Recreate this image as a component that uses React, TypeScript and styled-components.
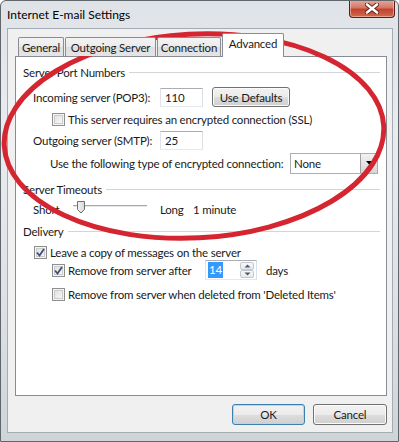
import React from 'react';
import styled, { createGlobalStyle } from 'styled-components';

const GlobalStyle = createGlobalStyle`
  html, body {
    margin: 0;
    padding: 0;
    background: #ffffff;
  }
  body {
    font-family: Lato, "Open Sans", "Liberation Sans", sans-serif;
    font-size: 11.5px;
    letter-spacing: -0.2px;
    color: #1a1a1a;
  }
  * {
    box-sizing: border-box;
  }
`;

const Window = styled.div`
  position: relative;
  width: 399px;
  height: 442px;
  display: flex;
  flex-direction: column;
  border: 1px solid #5f666c;
  border-radius: 6px 6px 0 0;
  background: linear-gradient(180deg, #dfe3e8 0%, #e9ecef 30%, #dde1e6 70%, #cfd4d9 100%);
  overflow: hidden;
`;

const TitleBar = styled.div`
  height: 27px;
  display: flex;
  align-items: flex-start;
  padding-left: 6px;
  flex-shrink: 0;
`;

const Title = styled.span`
  margin-top: 6px;
  font-size: 12px;
  letter-spacing: 0;
  color: #000;
  flex: 1;
`;

const CloseButton = styled.div`
  width: 46px;
  height: 18px;
  margin-top: -1px;
  margin-right: 3px;
  border: 1px solid #5a1e16;
  border-top: none;
  border-radius: 0 0 4px 4px;
  background: linear-gradient(180deg, #e9a99b 0%, #d47866 45%, #c2432f 55%, #cf6a4f 100%);
  box-shadow: inset 0 0 0 1px rgba(255, 220, 210, 0.5);
  display: flex;
  align-items: center;
  justify-content: center;
`;

const Client = styled.div`
  flex: 1;
  margin: 0 5px 8px 6px;
  border: 1px solid #a3abb4;
  background: #f0f0f0;
  padding: 4px 5px 0 7px;
  display: flex;
  flex-direction: column;
`;

const TabStrip = styled.div`
  height: 23px;
  display: flex;
  align-items: flex-end;
  gap: 1px;
  padding-left: 3px;
  position: relative;
  z-index: 1;
`;

const Tab = styled.div<{ $w: number; $active?: boolean }>`
  width: ${(p) => p.$w}px;
  height: ${(p) => (p.$active ? 24 : 19)}px;
  margin-bottom: ${(p) => (p.$active ? -1 : 0)}px;
  border: 1px solid #898c95;
  border-bottom: none;
  border-radius: 2px 2px 0 0;
  background: ${(p) =>
    p.$active ? '#ffffff' : 'linear-gradient(180deg, #f3f3f3 0%, #ebebeb 50%, #dedede 51%, #e5e5e5 100%)'};
  display: flex;
  align-items: center;
  justify-content: center;
  padding-bottom: ${(p) => (p.$active ? 4 : 0)}px;
  white-space: nowrap;
`;

const Panel = styled.div`
  height: 340px;
  border: 1px solid #898c95;
  background: #ffffff;
  padding: 6px 6px 0 7px;
  display: flex;
  flex-direction: column;
`;

const Row = styled.div<{ $mt?: number; $indent?: number }>`
  height: 18px;
  display: flex;
  align-items: center;
  margin-top: ${(p) => p.$mt ?? 0}px;
  padding-left: ${(p) => p.$indent ?? 0}px;
  white-space: nowrap;
`;

const GroupLine = styled.div`
  flex: 1;
  height: 1px;
  margin-left: 4px;
  background: #d0d5d9;
`;

const Label = styled.span<{ $w?: number; $ml?: number }>`
  display: inline-block;
  flex-shrink: 0;
  width: ${(p) => (p.$w ? `${p.$w}px` : 'auto')};
  margin-left: ${(p) => p.$ml ?? 0}px;
`;

const TextBox = styled.div`
  width: 43px;
  height: 19px;
  border: 1px solid;
  border-color: #abadb3 #dbdfe6 #e3e9ef #e2e3ea;
  background: #ffffff;
  padding-left: 4px;
  display: flex;
  align-items: center;
  flex-shrink: 0;
`;

const PushButton = styled.div<{ $w: number; $default?: boolean }>`
  width: ${(p) => p.$w}px;
  height: 21px;
  border: 1px solid ${(p) => (p.$default ? '#3c7fb1' : '#707070')};
  border-radius: 3px;
  background: linear-gradient(180deg, #f2f2f2 0%, #ebebeb 50%, #dddddd 51%, #cfcfcf 100%);
  box-shadow: inset 0 0 0 1px ${(p) => (p.$default ? '#a9dbf6' : '#fbfbfb')};
  display: flex;
  align-items: center;
  justify-content: center;
  flex-shrink: 0;
`;

const DefaultsButton = styled(PushButton)`
  margin-left: 9px;
  height: 20px;
`;

const CheckBox = styled.div`
  width: 13px;
  height: 13px;
  border: 1px solid #8e8f8f;
  background: linear-gradient(135deg, #dcdcdc 0%, #f0f0f0 60%, #fcfcfc 100%);
  box-shadow: inset 0 0 0 1px #f4f4f4, inset 0 0 0 2px #cbcbcb;
  margin-right: 3px;
  flex-shrink: 0;
  display: flex;
  align-items: center;
  justify-content: center;
`;

const Select = styled.div`
  width: 88px;
  height: 21px;
  border: 1px solid #abadb3;
  background: #ffffff;
  display: flex;
  align-items: center;
  padding-left: 3px;
  flex-shrink: 0;
`;

const SelectText = styled.span`
  flex: 1;
`;

const DropButton = styled.div`
  width: 17px;
  height: 19px;
  border-left: 1px solid #a0a0a0;
  background: linear-gradient(180deg, #f2f2f2 0%, #e4e4e4 50%, #d6d6d6 100%);
  display: flex;
  align-items: center;
  justify-content: center;
`;

const Spinner = styled.div`
  width: 52px;
  height: 20px;
  border: 1px solid;
  border-color: #abadb3 #dbdfe6 #e3e9ef #e2e3ea;
  background: #ffffff;
  display: flex;
  align-items: center;
  padding-left: 2px;
  flex-shrink: 0;
`;

const SpinValue = styled.span`
  background: #3399ff;
  color: #ffffff;
  padding: 1px 1px;
  line-height: 14px;
`;

const SpinButtons = styled.div`
  margin-left: auto;
  margin-right: 2px;
  width: 14px;
  height: 16px;
  display: flex;
  flex-direction: column;
`;

const SpinButton = styled.div`
  flex: 1;
  border: 1px solid #c3c8d0;
  border-radius: 2px;
  background: linear-gradient(180deg, #f7f8f9 0%, #e6e9ec 100%);
  display: flex;
  align-items: center;
  justify-content: center;
`;

const ButtonBar = styled.div`
  display: flex;
  justify-content: flex-end;
  gap: 8px;
  padding-top: 8px;
`;

const Annotation = styled.svg`
  position: absolute;
  left: 0;
  top: 0;
  pointer-events: none;
`;

const Arrow = ({ up }: { up?: boolean }) => (
  <svg width="7" height="4" viewBox="0 0 7 4">
    <path d={up ? 'M0.5 3.5 L3.5 0.5 L6.5 3.5 Z' : 'M0.5 0.5 L3.5 3.5 L6.5 0.5 Z'} fill="#4d5a6c" />
  </svg>
);

const Check = () => (
  <svg width="9" height="9" viewBox="0 0 9 9">
    <path d="M1 4.5 L3.5 7.5 L8 1" fill="none" stroke="#3d4f7c" strokeWidth="1.8" />
  </svg>
);

const SliderTrack = () => (
  <svg width="80" height="18" viewBox="0 0 80 18">
    <rect x="3" y="5" width="74" height="1" fill="#a7a7a7" />
    <rect x="3" y="6" width="74" height="1" fill="#e7e7e7" />
    <defs>
      <linearGradient id="thumb" x1="0" y1="0" x2="1" y2="0">
        <stop offset="0" stopColor="#f4f4f4" />
        <stop offset="1" stopColor="#d6d6d6" />
      </linearGradient>
    </defs>
    <path d="M7.5 1.5 H14.5 V9.5 L11 13 L7.5 9.5 Z" fill="url(#thumb)" stroke="#707070" />
  </svg>
);

const App = () => {
  return (
    <>
      <GlobalStyle />
      <Window>
        <TitleBar>
          <Title>Internet E-mail Settings</Title>
          <CloseButton>
            <svg width="14" height="11" viewBox="0 0 14 11">
              <path d="M2 1.5 L12 9.5 M12 1.5 L2 9.5" stroke="#5a2018" strokeWidth="4.4" strokeLinecap="round" />
              <path d="M2 1.5 L12 9.5 M12 1.5 L2 9.5" stroke="#ffffff" strokeWidth="2.6" strokeLinecap="round" />
            </svg>
          </CloseButton>
        </TitleBar>
        <Client>
          <TabStrip>
            <Tab $w={46}>General</Tab>
            <Tab $w={91}>Outgoing Server</Tab>
            <Tab $w={64}>Connection</Tab>
            <Tab $w={62} $active>
              Advanced
            </Tab>
          </TabStrip>
          <Panel>
            <Row>
              <span>Server Port Numbers</span>
              <GroupLine />
            </Row>
            <Row $mt={7} $indent={10}>
              <Label $w={127}>Incoming server (POP3):</Label>
              <TextBox>110</TextBox>
              <DefaultsButton $w={78}>Use Defaults</DefaultsButton>
            </Row>
            <Row $mt={4} $indent={29}>
              <CheckBox />
              <span>This server requires an encrypted connection (SSL)</span>
            </Row>
            <Row $mt={3} $indent={10}>
              <Label $w={127}>Outgoing server (SMTP):</Label>
              <TextBox>25</TextBox>
            </Row>
            <Row $mt={5} $indent={27}>
              <Label $w={240}>Use the following type of encrypted connection:</Label>
              <Select>
                <SelectText>None</SelectText>
                <DropButton>
                  <svg width="7" height="4" viewBox="0 0 7 4">
                    <path d="M0 0 L7 0 L3.5 4 Z" fill="#000" />
                  </svg>
                </DropButton>
              </Select>
            </Row>
            <Row $mt={8}>
              <span>Server Timeouts</span>
              <GroupLine />
            </Row>
            <Row $mt={2} $indent={10}>
              <Label $w={37}>Short</Label>
              <SliderTrack />
              <Label $w={33} $ml={10}>
                Long
              </Label>
              <span>1 minute</span>
            </Row>
            <Row $mt={4}>
              <span>Delivery</span>
              <GroupLine />
            </Row>
            <Row $mt={3} $indent={11}>
              <CheckBox>
                <Check />
              </CheckBox>
              <span>Leave a copy of messages on the server</span>
            </Row>
            <Row $mt={0} $indent={29}>
              <CheckBox>
                <Check />
              </CheckBox>
              <Label $w={137}>Remove from server after</Label>
              <Spinner>
                <SpinValue>14</SpinValue>
                <SpinButtons>
                  <SpinButton>
                    <Arrow up />
                  </SpinButton>
                  <SpinButton>
                    <Arrow />
                  </SpinButton>
                </SpinButtons>
              </Spinner>
              <Label $ml={9}>days</Label>
            </Row>
            <Row $mt={6} $indent={29}>
              <CheckBox />
              <span>Remove from server when deleted from 'Deleted Items'</span>
            </Row>
          </Panel>
          <ButtonBar>
            <PushButton $w={73} $default>
              OK
            </PushButton>
            <PushButton $w={74}>Cancel</PushButton>
          </ButtonBar>
        </Client>
        <Annotation width="399" height="442" viewBox="0 0 399 442">
          <ellipse
            cx="193"
            cy="135"
            rx="190"
            ry="102"
            transform="rotate(-3 193 135)"
            fill="none"
            stroke="#d42530"
            strokeWidth="5"
          />
        </Annotation>
      </Window>
    </>
  );
};

export default App;
